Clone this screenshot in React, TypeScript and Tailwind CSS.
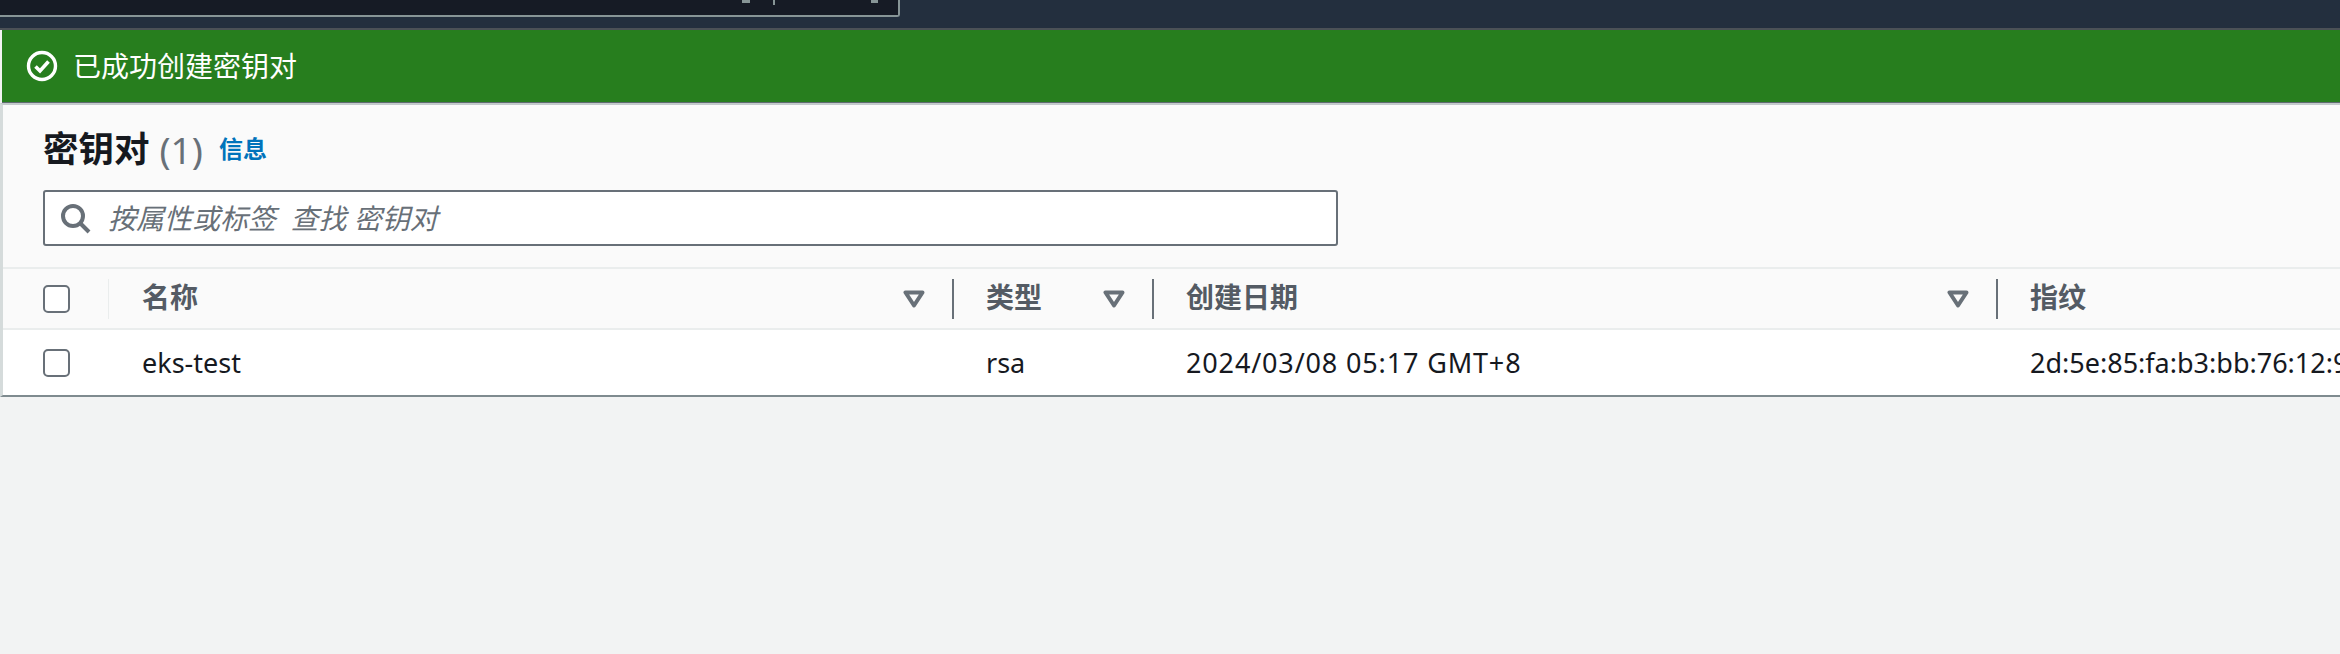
const FONT = "font-['Noto_Sans','Noto_Sans_CJK_SC',sans-serif]";

function Checkbox() {
  return <div className="h-[28px] w-[27px] shrink-0 rounded-[5px] border-2 border-[#687078] bg-white" />;
}

function SortIcon() {
  return (
    <svg width="22" height="18" viewBox="0 0 22 18" className="shrink-0">
      <path d="M2.5 2.5 H19.5 L11 15.5 Z" fill="none" stroke="#687078" strokeWidth="4" strokeLinejoin="round" />
    </svg>
  );
}

function HeaderCell({ label, className, sortable = true }: { label: string; className: string; sortable?: boolean }) {
  return (
    <div className={`flex items-center ${className}`}>
      <span className="pb-[3px] text-[28px] leading-none font-bold text-[#545b64]">{label}</span>
      {sortable && (
        <div className="ml-auto flex items-center">
          <SortIcon />
          <div className="ml-[27px] h-[40px] w-[2px] bg-[#687078]" />
        </div>
      )}
    </div>
  );
}

export default function App() {
  return (
    <div className={`h-[654px] w-[2340px] overflow-hidden bg-[#f2f3f3] ${FONT}`}>
      {/* top nav, search box is cut off by the crop */}
      <div className="h-[30px] border-b-2 border-[#4b5157] bg-[#232f3e]">
        <div className="relative h-[17px] w-[900px] rounded-br-[3px] border-r-2 border-b-2 border-[#879596] bg-[#161b25]">
          <span className="absolute top-0 left-[742px] h-[3px] w-[8px] bg-[#879596]" />
          <span className="absolute top-0 left-[773px] h-[5px] w-[2px] bg-[#879596]" />
          <span className="absolute top-0 left-[871px] h-[3px] w-[7px] bg-[#879596]" />
        </div>
      </div>

      <div className="ml-[2px] flex h-[73px] items-center border-b border-[#5f6b6f] bg-[#277e1e] pl-[24px] text-white">
        <svg width="32" height="32" viewBox="0 0 32 32" className="shrink-0">
          <circle cx="16" cy="16" r="13.5" fill="none" stroke="white" strokeWidth="3.4" />
          <path d="M9.5 16.5 L14 21 L22.5 11.5" fill="none" stroke="white" strokeWidth="3.6" />
        </svg>
        <span className="ml-[15px] text-[28px] leading-none">已成功创建密钥对</span>
      </div>

      {/* key pair table */}
      <div className="border-t-2 border-b-2 border-l-[3px] border-t-[#c3c9cb] border-b-[#7f8b8f] border-l-[#d5dbdb] bg-white">
        <div className="h-[162px] bg-[#fafafa] pt-[19px] pl-[40px]">
          <div className="flex h-[50px] items-center">
            <span className="text-[35.5px] leading-none font-bold text-[#16191f]">密钥对</span>
            <span className="ml-[10px] text-[37px] leading-none text-[#687078]">(1)</span>
            <span className="ml-[16px] text-[24px] leading-none font-bold text-[#0073bb]">信息</span>
          </div>
          <div className="mt-[16px] flex h-[56px] w-[1295px] items-center rounded-[3px] border-2 border-[#687078] bg-white pl-[14px]">
            <svg width="32" height="32" viewBox="0 0 32 32" className="shrink-0">
              <circle cx="14" cy="14" r="10" fill="none" stroke="#687078" strokeWidth="4" />
              <path d="M21 21 L30 30" fill="none" stroke="#687078" strokeWidth="4" />
            </svg>
            <span className="ml-[17px] text-[28px] leading-none text-[#687078] italic">按属性或标签&nbsp; 查找 密钥对</span>
          </div>
        </div>

        <div className="flex h-[63px] items-center border-t-2 border-b-2 border-[#eaeded] bg-[#fafafa]">
          <div className="flex w-[106px] shrink-0 items-center pl-[40px]">
            <Checkbox />
            <div className="ml-[38px] h-[40px] w-[2px] bg-[#eaeded]" />
          </div>
          <HeaderCell label="名称" className="w-[845px] shrink-0 pl-[33px]" />
          <HeaderCell label="类型" className="w-[200px] shrink-0 pl-[32px]" />
          <HeaderCell label="创建日期" className="w-[844px] shrink-0 pl-[32px]" />
          <HeaderCell label="指纹" className="flex-1 pl-[32px]" sortable={false} />
        </div>

        <div className="flex h-[65px] items-center overflow-hidden bg-white text-[27px] leading-none whitespace-nowrap text-[#16191f]">
          <div className="flex w-[106px] shrink-0 items-center pl-[40px]">
            <Checkbox />
          </div>
          <div className="w-[845px] shrink-0 pl-[33px]">eks-test</div>
          <div className="w-[200px] shrink-0 pl-[32px]">rsa</div>
          <div className="w-[844px] shrink-0 pl-[32px] tracking-[0.85px]">2024/03/08 05:17 GMT+8</div>
          <div className="flex-1 pl-[32px]">2d:5e:85:fa:b3:bb:76:12:9c</div>
        </div>
      </div>
    </div>
  );
}
